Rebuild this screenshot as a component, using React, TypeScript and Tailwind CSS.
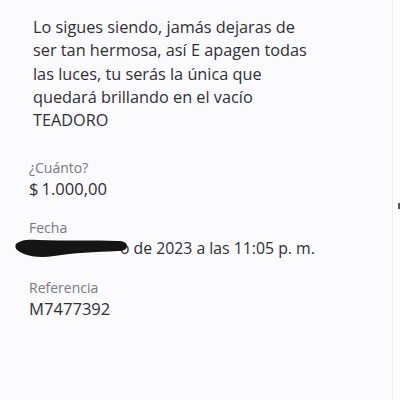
export default function App() {
  const rows = [
    { label: "¿Cuánto?", value: "amount" },
    { label: "Fecha", value: "fecha" },
    { label: "Referencia", value: "M7477392" },
  ];

  return (
    <main className="relative w-[400px] h-[400px] overflow-hidden bg-[#fbfafd] font-['Open_Sans',sans-serif]">
      {/* MESSAGE */}
      <p className="pt-[16px] pl-[33px] pr-[40px] text-[16.3px] leading-[23.3px] text-[#2f2f33] whitespace-nowrap">
        Lo sigues siendo, jamás dejaras de
        <br />
        ser tan hermosa, así E apagen todas
        <br />
        las luces, tu serás la única que
        <br />
        quedará brillando en el vacío
        <br />
        TEADORO
      </p>

      {/* DETAILS */}
      <div className="mt-[25px] pl-[29px] flex flex-col gap-[18px]">
        {rows.map((r) => (
          <div key={r.label} className="flex flex-col">
            <span className="text-[14px] leading-[21px] text-[#7a797e]">{r.label}</span>
            {r.value === "fecha" ? (
              <span className="relative text-[15.8px] leading-[21px] text-[#2f2f33] whitespace-nowrap">
                <span className="inline-block w-[91px]" />o de 2023 a las 11:05 p. m.
                <svg
                  className="absolute left-[-15px] top-[0px]"
                  width="114"
                  height="21"
                  viewBox="0 0 114 21"
                >
                  <path
                    d="M2 6 C6 2 14 1 24 2 C50 3 80 2 104 3 C110 3 113 5 113 8 C113 11 110 13 104 13 C80 14 60 15 40 18 C28 20 18 19 10 16 C3 13 0 10 2 6 Z"
                    fill="#151515"
                  />
                </svg>
              </span>
            ) : r.value === "amount" ? (
              <span className="text-[16.6px] leading-[21px] text-[#2f2f33] whitespace-nowrap">
                $<span className="inline-block w-[3px]" />1.000,00
              </span>
            ) : (
              <span className="text-[16.6px] leading-[21px] text-[#2f2f33]">{r.value}</span>
            )}
          </div>
        ))}
      </div>

      {/* right edge */}
      <div className="absolute right-0 top-0 w-[8px] h-full border-l border-[#efeef2] bg-[#fdfcfe]" />
      <div className="absolute right-0 top-[203px] w-[2px] h-[6px] bg-[#555]" />
    </main>
  );
}
